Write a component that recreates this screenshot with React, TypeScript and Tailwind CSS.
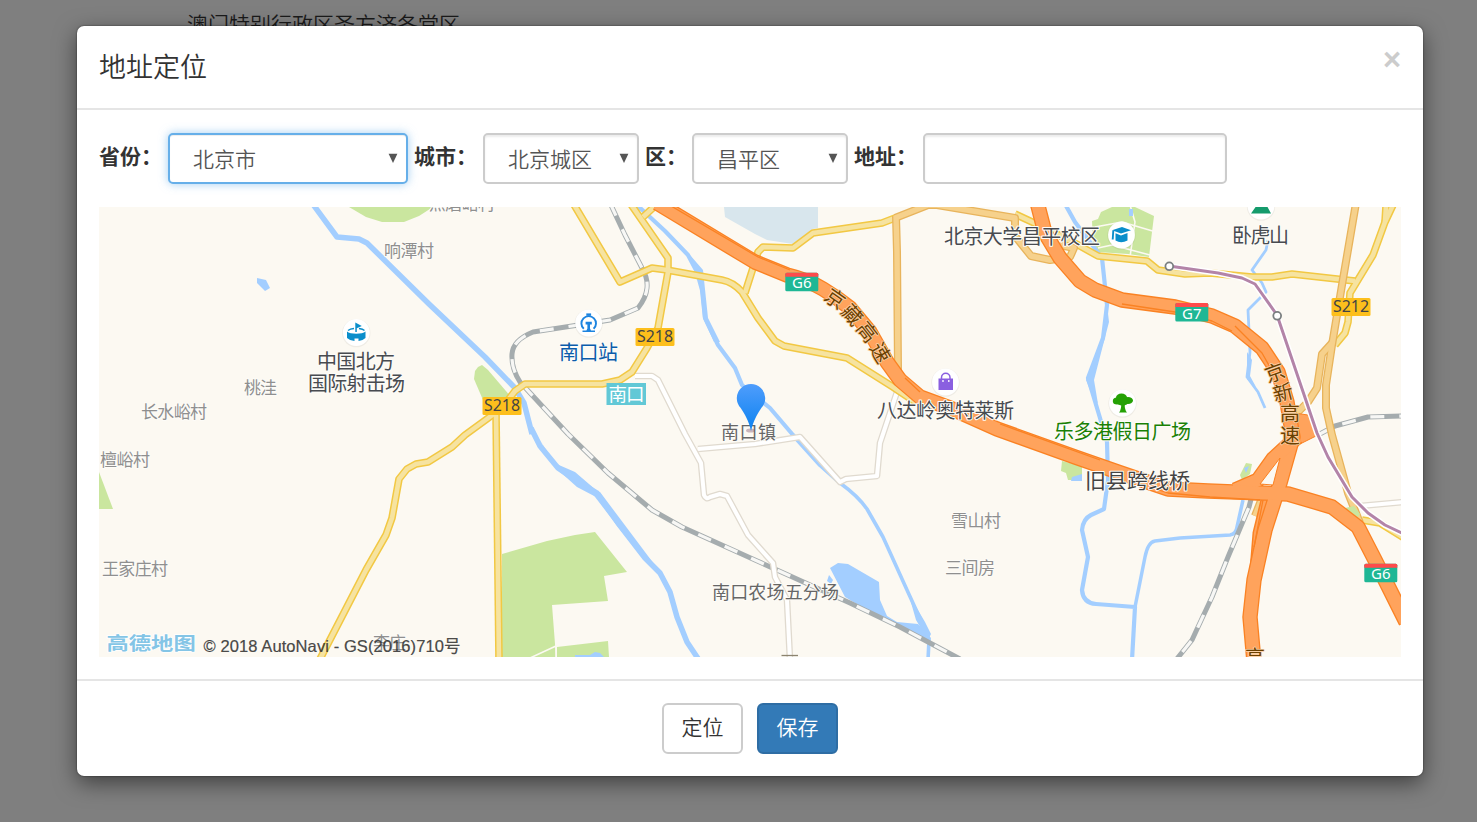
import React from "react";

const RIVERS: { d: string; w: number }[] = [
  { d: "M312 203L337 237L359 239L367 243L429 304L485 357L515 388L524 403L532 434", w: 5.5 },
  { d: "M531 428L540 446L558 468L577 481L597 493L618 523L645 558L660 573L670 592L677 617L687 642L699 660", w: 5.5 },
  { d: "M638 206L665 231L688 255L697 272L702 290L705 318L718 345L735 368L742 385L770 408L793 435L820 465L840 483", w: 4.2 },
  { d: "M840 483Q858 496 867 509L883 537L907 590L923 625L929 640L928 660", w: 3.6 },
  { d: "M1065 204L1075 222L1102 258L1107 305L1103 338L1088 378L1100 418L1107 442L1108 480L1104 509L1091 515Q1083 519 1082 530L1088 557L1082 590Q1083 603 1096 604L1135 607L1132 660", w: 4.2 },
  { d: "M1135 607L1145 557Q1148 542 1155 541L1180 538L1230 535Q1236 534 1237 527L1243 500", w: 3.5 },
  { d: "M1268 240L1266 250L1252 270L1262 283L1266 292L1248 310L1250 352L1247 377L1258 392L1265 408", w: 2.8 },
];

const WATER = [
  "257,278 266,280 270,288 265,291 257,283",
  "690,255 703,270 708,318 720,342 714,342 703,318 700,285",
  "540,440 552,462 575,472 596,490 596,497 577,487 558,470",
  "592,493 600,492 636,540 660,572 645,560 618,527",
  "830,568 838,563 848,564 879,582 880,600 887,616 897,622 918,624 931,638 930,642 887,622 850,600 845,597",
  "829,575 833,580 831,584 827,581",
  "906,585 912,600 925,622 931,634 928,640 916,620",
  "1107,305 1109,322 1094,380 1098,404 1090,390 1086,380 1103,335",
  "1247,352 1252,360 1250,376 1256,387 1247,379",
];

const RAIL =
  "M610 203L625 235L642 268Q648 278 647 288T638 308L610 320L572 326L533 332Q513 340 512 354T520 382L568 434L608 473L652 510L682 527L755 560L850 603L900 627L930 643L960 659";
const RAIL_SOUTH = "M1256 480L1249 507L1228 557L1212 597L1198 627L1192 640L1176 660";
const RAIL_EAST = "M1316 436L1335 426L1368 417L1404 416";

const LANES = [
  "M635 376H652L658 380L685 434L701 463L704 495Q706 500 710 497L720 494L727 496L748 535L773 563L775 577L787 600L790 660",
  "M698 449L755 444L800 437L840 482L846 479L877 476L880 443L897 392",
  "M1360 506L1404 502",
];

const YELLOW = [
  "M573 203L620 282L652 268L667 270L722 280Q733 282 742 292L758 318L775 341L784 346L847 358L893 387L917 403",
  "M630 203L668 258V272L658 328L647 348L632 372L620 380L602 384L525 384L515 391L502 408L465 435L452 447L428 462L416 464L407 469L399 479L392 518L386 535L366 570L319 661",
  "M496 412L499 660",
  "M643 217L655 206",
  "M745 293L753 268L758 252L763 247L793 248L813 233L882 223L895 218",
  "M1015 214L1045 228L1080 246L1098 256L1147 261L1158 270L1185 274L1210 273L1252 277H1272L1292 274L1355 281",
  "M1394 203L1385 222L1373 255L1350 293L1348 322L1345 333L1335 345",
  "M1386 206L1385 222",
  "M1362 520L1380 523L1404 538",
];

const TAN = [
  "M895 218L928 205H937L1015 218V236L1031 256L1050 260L1070 257L1074 248L1060 245",
  "M896 216L897 252L898 370",
  "M1356 203L1342 285L1332 345L1326 385V408L1332 435L1348 493L1360 523",
  "M1332 343L1322 354L1317 388L1308 402L1296 414",
  "M1262 498L1255 516",
];

const ORANGE_G6 =
  "M657 203L755 262L787 275Q808 280 823 289T850 308L870 332L887 362L900 380L920 397L950 408L997 429L1075 457L1118 472L1168 489L1208 491L1288 494L1332 507L1358 527L1375 560L1406 622";
const ORANGE_G7 =
  "M1037 202L1045 233L1060 258L1080 281L1095 290L1122 300L1175 307L1212 316L1235 326L1262 348L1278 372L1287 402L1293 437L1280 483L1265 530L1254 580L1250 617L1254 662";
const ORANGE_RAMP = "M1297 437L1273 459L1258 480L1235 490";
const ORANGE_SIDE = "M1266 496L1257 533L1254 570";

type Label = { x: number; y: number; t: string; w: number; s?: number; c?: string };

const LABELS: Label[] = [
  { x: 429, y: 210, t: "点磨峪村", w: 66, s: 17, c: "#8f8f8f" },
  { x: 384, y: 257, t: "响潭村", w: 50, s: 17, c: "#8f8f8f" },
  { x: 244, y: 394, t: "桃洼", w: 33, s: 17, c: "#8f8f8f" },
  { x: 141, y: 418, t: "长水峪村", w: 66, s: 17, c: "#8f8f8f" },
  { x: 100, y: 466, t: "檀峪村", w: 50, s: 17, c: "#8f8f8f" },
  { x: 102, y: 575, t: "王家庄村", w: 66, s: 17, c: "#8f8f8f" },
  { x: 373, y: 649, t: "李庄", w: 33, s: 17, c: "#8f8f8f" },
  { x: 951, y: 527, t: "雪山村", w: 50, s: 17, c: "#8f8f8f" },
  { x: 945, y: 574, t: "三间房", w: 50, s: 17, c: "#8f8f8f" },
  { x: 317, y: 369, t: "中国北方", w: 78, s: 20, c: "#484b50" },
  { x: 308, y: 391, t: "国际射击场", w: 97, s: 20, c: "#484b50" },
  { x: 559, y: 360, t: "南口站", w: 59, s: 20, c: "#0b5cab" },
  { x: 721, y: 439, t: "南口镇", w: 55, s: 18, c: "#666" },
  { x: 712, y: 599, t: "南口农场五分场", w: 127, s: 18, c: "#666" },
  { x: 944, y: 244, t: "北京大学昌平校区", w: 156, s: 20, c: "#484b50" },
  { x: 1232, y: 243, t: "卧虎山", w: 57, s: 20, c: "#484b50" },
  { x: 877, y: 418, t: "八达岭奥特莱斯", w: 137, s: 20, c: "#484b50" },
  { x: 1054, y: 439, t: "乐多港假日广场", w: 137, s: 20, c: "#1a8005" },
  { x: 1085, y: 488, t: "旧县跨线桥", w: 105, s: 21, c: "#444" },
];

const ROAD_CHARS = [
  { x: 835, y: 299, r: 35, t: "京" },
  { x: 852, y: 315, r: 48, t: "藏" },
  { x: 867, y: 332, r: 52, t: "高" },
  { x: 880, y: 353, r: 60, t: "速" },
  { x: 1275, y: 373, r: -20, t: "京" },
  { x: 1283, y: 393, r: -14, t: "新" },
  { x: 1290, y: 414, r: 0, t: "高" },
  { x: 1290, y: 436, r: 0, t: "速" },
  { x: 1255, y: 658, r: 0, t: "高" },
];

function Cased({ d, edge, fill, w, b = 1.4 }: { d: string; edge: string; fill: string; w: number; b?: number }) {
  return (
    <>
      <path d={d} stroke={edge} strokeWidth={w} />
      <path d={d} stroke={fill} strokeWidth={w - b * 2} />
    </>
  );
}

function Rail({ d }: { d: string }) {
  return (
    <>
      <path d={d} stroke="#a5acae" strokeWidth="5" />
      <path d={d} stroke="#f7f7f5" strokeWidth="3.2" strokeDasharray="14 15" />
    </>
  );
}

function Province({ x, y, t }: { x: number; y: number; t: string }) {
  return (
    <g>
      <rect x={x} y={y} width="39" height="18" rx="1.5" fill="#fdbf1c" />
      <text x={x + 1.5} y={y + 14.3} fontSize="15.5" textLength="36" lengthAdjust="spacingAndGlyphs" fill="#444">{t}</text>
    </g>
  );
}

function National({ x, y, t }: { x: number; y: number; t: string }) {
  return (
    <g>
      <rect x={x} y={y} width="33" height="18.500" rx="1.5" fill="#1eb795" />
      <path d={`M${x} ${y + 4}V${y + 1.5}Q${x} ${y} ${x + 1.5} ${y}H${x + 31.5}Q${x + 33} ${y} ${x + 33} ${y + 1.5}V${y + 4}Z`} fill="#ff4b4b" />
      <text x={x + 16.5} y={y + 15.6} textAnchor="middle" fontSize="15" fill="#fff">{t}</text>
    </g>
  );
}

function Disc({ x, y }: { x: number; y: number }) {
  return (
    <>
      <circle cx={x} cy={y + 0.6} r="14.200" fill="#000" fillOpacity="0.05" />
      <circle cx={x} cy={y} r="13.400" fill="#fff" />
    </>
  );
}

function MapCanvas() {
  return (
    <svg
      viewBox="99 207 1302 450"
      className="block h-[450px] w-[1302px] font-['Noto_Sans','Noto_Sans_CJK_SC',sans-serif]"
      fill="none"
      strokeLinejoin="round"
    >
      <rect x="99" y="207" width="1302" height="450" fill="#fcf9f2" />

      <g fill="#cae69f">
        <path d="M349 207L366 217L382 222H404L419 216L433 207Z" />
        <path d="M99 472L113 509H99Z" />
        <path d="M474 379L475 371L478 367L482 365L488 370L512 398L483 400Z" />
        <path d="M502 554L547 541L575 535L595 532L627 572L604 576L608 601L552 605L556 657H502Z" />
        <path d="M557 647L608 641L609 657H557Z" />
        <path d="M1092 221L1098 219L1101 212L1112 207H1135L1154 216L1152 232L1149 257L1128 254L1097 252L1093 244Z" />
        <path d="M1062 461L1082 466V480H1068L1066 473L1061 471Z" />
        <path d="M1240 475L1246 463L1252 464L1250 474L1242 480Z" />
      </g>
      <path d="M530 658L556 646V658M1095 227L1122 222L1156 232M1130 205L1135 222L1130 257M1098 248L1112 245L1150 255" stroke="#fcf9f2" strokeWidth="1.600" />
      <path d="M1129 209H1133V216H1129ZM1072 477L1082 474V481H1071ZM575 655L590 655L595 652L600 653L604 657H575ZM1244 468L1249 466L1246 473Z" fill="#a3ceff" />
      <path d="M724 207L725 217L755 234L767 240L793 244L813 229L818 228V207Z" fill="#d8e6ed" />

      {RIVERS.map((r) => (
        <path key={r.d} d={r.d} stroke="#a3ceff" strokeWidth={r.w} />
      ))}
      {WATER.map((p) => (
        <polygon key={p} points={p} fill="#a3ceff" />
      ))}

      <Rail d={RAIL} />
      <Rail d={RAIL_SOUTH} />
      <Rail d={RAIL_EAST} />
      {LANES.map((d) => (
        <Cased key={d} d={d} edge="#e0dacf" fill="#fff" w={6.6} b={1.3} />
      ))}

      {YELLOW.map((d) => (
        <path key={d} d={d} stroke="#f2c843" strokeWidth={7.6} />
      ))}
      {YELLOW.map((d) => (
        <path key={d} d={d} stroke="#f6e3a0" strokeWidth={4.6} />
      ))}
      {TAN.map((d) => (
        <path key={d} d={d} stroke="#e8b45c" strokeWidth={8} />
      ))}
      {TAN.map((d) => (
        <path key={d} d={d} stroke="#f6d18c" strokeWidth={5.4} />
      ))}
      <path d="M1345 508L1354 506L1360 514L1356 519Z" fill="#cae69f" />

      <path d={ORANGE_SIDE} stroke="#fa8223" strokeWidth="9" />
      <path d={ORANGE_SIDE} stroke="#ffa35c" strokeWidth="6" />
      <path d="M1287 412L1308 415L1316 436L1292 448Z" fill="#ffa35c" stroke="#fa8223" strokeWidth="1" />
      {[ORANGE_G7, ORANGE_RAMP, ORANGE_G6].map((d) => (
        <path key={d} d={d} stroke="#fa8223" strokeWidth="15.400" />
      ))}
      {[ORANGE_G7, ORANGE_RAMP, ORANGE_G6].map((d) => (
        <path key={d} d={d} stroke="#ffa35c" strokeWidth="12.800" />
      ))}
      <path d="M1260 484L1280 458L1273 485Z" fill="#fcf9f2" stroke="#fa8223" strokeWidth="1" />
      <path
        d="M666 203L758 257L790 270M1122 304L1175 312L1212 321L1232 331M1235 326L1262 353L1275 376M920 392L905 378M1000 424L1100 460M1150 487L1168 493L1210 497L1260 500M1263 500L1254 547"
        stroke="#fa8223"
        strokeWidth="1.300"
      />

      <path d="M1169 266L1218 273L1242 278L1255 284L1277 315L1317 433L1328 457L1352 497L1368 513L1385 525L1404 534" stroke="#fff" strokeWidth="6" />
      <path d="M1169 266L1218 273L1242 278L1255 284L1277 315L1317 433L1328 457L1352 497L1368 513L1385 525L1404 534" stroke="#b384a8" strokeWidth="3" />
      <g fill="#fff" stroke="#7a7f80" strokeWidth="1.800">
        <circle cx="1169.300" cy="266.300" r="3.900" />
        <circle cx="1277.200" cy="315.800" r="3.900" />
      </g>

      <Province x={635.5} y={328} t="S218" />
      <Province x={482.5} y={397} t="S218" />
      <Province x={1331.5} y={298} t="S212" />
      <National x={785.3} y={272.7} t="G6" />
      <National x={1175.3} y={303} t="G7" />
      <National x={1364.3} y={563.8} t="G6" />
      <rect x="606.500" y="383" width="39.500" height="22" fill="#62c8d6" />
      <text x="608.500" y="401" fontSize="18.500" textLength="36" fill="#fff">南口</text>

      <Disc x={356.3} y={332.5} />
      <g fill="#0a8ecb">
        <path d="M347 331.500C350 334.500 362.500 334.500 365.500 331.500V338Q363 340.500 358.500 341V338.500H354.500V341Q349.500 340.500 347 338Z" />
        <path d="M348 330.500Q350 328.800 354 328.500M359 328.500Q363 328.900 364.500 330.500" stroke="#0a8ecb" strokeWidth="1.300" fill="none" />
        <path d="M355.300 332V322.500L361.800 326L356.800 328.300V332Z" />
      </g>
      <Disc x={588.7} y={323} />
      <g stroke="#1d84e0" strokeWidth="1.900">
        <path d="M583.800 328.800A7.300 7.300 0 1 1 593.600 328.800" />
        <path d="M586.300 314.600H591.100" strokeWidth="2.400" />
      </g>
      <path d="M585.600 321.800H591.800V324.600H590V328.500L591 330.600H595V332H582.500V330.600H586.400L587.400 328.500V324.600H585.600Z" fill="#1d84e0" />
      <Disc x={945.5} y={382} />
      <path d="M938.500 378.500H953V390H938.500Z" fill="#8a5fe0" />
      <path d="M941.500 379V377.500A4.200 4.200 0 0 1 950 377.500V379" stroke="#8a5fe0" strokeWidth="1.500" />
      <path d="M943 380V382M948.800 380V382" stroke="#fff" strokeWidth="1.300" />
      <Disc x={1121.5} y={235} />
      <path d="M1112 230.200L1122 227L1131 230.200L1121 233.600Z" fill="#0a8ecb" />
      <path d="M1115.500 233.300L1121 235.500L1127.500 233V240.500Q1121 244 1115.500 240.500Z" fill="#0a8ecb" />
      <path d="M1113.300 230.500L1112.700 239.500" stroke="#0a8ecb" strokeWidth="1.900" />
      <Disc x={1122.5} y={403} />
      <g fill="#25a105">
        <ellipse cx="1117" cy="401" rx="4.200" ry="3.600" />
        <ellipse cx="1121.500" cy="397.500" rx="5.500" ry="4" />
        <ellipse cx="1128" cy="400.500" rx="5" ry="3.500" />
        <ellipse cx="1122.500" cy="402" rx="6" ry="3.500" />
        <path d="M1121 403H1125Q1124 409 1127 412.500H1119Q1121.800 409 1121 403Z" />
      </g>
      <Disc x={1261} y={206} />
      <path d="M1251 213.500L1257 205L1262 203L1265 207L1267 206L1271 213.500Z" fill="#159b6c" />

      {LABELS.map((l) => (
        <text
          key={l.t}
          x={l.x}
          y={l.y}
          textLength={l.w}
          fontSize={l.s}
          fill={l.c}
          stroke="#fdfcf8"
          strokeWidth="2"
          paintOrder="stroke"
        >
          {l.t}
        </text>
      ))}
      {ROAD_CHARS.map((c, i) => (
        <text
          key={i}
          x={c.x}
          y={c.y + 7}
          fontSize="20"
          textAnchor="middle"
          transform={`rotate(${c.r} ${c.x} ${c.y})`}
          fill="#6b4100"
          stroke="#fbd0a5"
          strokeWidth="1.600"
          paintOrder="stroke"
        >
          {c.t}
        </text>
      ))}
      <path d="M781.500 655.500H798" stroke="#8c8470" strokeWidth="1.300" />

      <defs>
        <linearGradient id="pin" x1="0" y1="0" x2="0" y2="1">
          <stop offset="0" stopColor="#4f9dfc" />
          <stop offset="1" stopColor="#0c82f0" />
        </linearGradient>
      </defs>
      <ellipse cx="750.500" cy="430.500" rx="4.500" ry="2" fill="#7d5068" fillOpacity="0.4" />
      <path d="M751 431C748.500 420 745 415 740.500 407.800A14.200 14.200 0 1 1 761.500 407.800C757 415 753.500 420 751 431Z" fill="url(#pin)" />

      <text
        transform="translate(106.500 649.500) scale(1.240 1)"
        fontSize="18"
        fontWeight="700"
        fill="#84c5e6"
        stroke="#fff"
        strokeWidth="1.500"
        paintOrder="stroke"
      >
        高德地图
      </text>
      <text
        x="203.500"
        y="651.500"
        fontSize="16.500"
        textLength="257"
        fill="#333"
        fillOpacity="0.9"
        stroke="#333"
        strokeWidth="0.200"
        className="font-['Liberation_Sans','Noto_Sans_CJK_SC',sans-serif]"
      >
        © 2018 AutoNavi - GS(2016)710号
      </text>
    </svg>
  );
}

function Field({
  label,
  labelClass,
  boxClass,
  value,
}: {
  label: string;
  labelClass: string;
  boxClass: string;
  value: string;
}) {
  return (
    <div className="mr-1.5 flex">
      <span className={`pt-1.5 text-[21px] leading-[33px] font-bold text-[#333] ${labelClass}`}>{label}</span>
      <button
        className={`flex h-[51px] items-center justify-between rounded-[5px] border-2 bg-white pr-2 pl-[23px] text-[21px] font-[350] text-[#555] ${boxClass}`}
      >
        <span>{value}</span>
        <svg viewBox="0 0 10 11" className="h-[11px] w-[10px]">
          <path d="M0.600 0.800H9.400L5 10Z" fill="#555" />
        </svg>
      </button>
    </div>
  );
}

export default function App() {
  return (
    <div className="h-[822px] w-[1477px] overflow-hidden bg-[#7f7f7f] font-['Noto_Sans_CJK_SC',sans-serif]">
      <p className="h-[26px] pt-2 pl-[187px] text-[21px] leading-[30px] font-[350] text-[#1a1a1a]">
        澳门特别行政区圣方济各堂区
      </p>
      <section className="relative ml-[77px] flex h-[750px] w-[1346px] flex-col rounded-[7px] bg-white shadow-[0_7px_22px_rgba(0,0,0,0.5),0_0_2px_rgba(0,0,0,0.6)]">
        <header className="flex h-[84px] justify-between border-b-2 border-[#e5e5e5] px-[22px]">
          <h4 className="pt-5 text-[27px] leading-[39px] font-[350] text-[#333]">地址定位</h4>
          <button className="mt-4 h-9 font-['Liberation_Sans',sans-serif] text-[31px] leading-9 font-bold text-[#ccc]">×</button>
        </header>
        <main className="h-[571px] border-b-2 border-[#e5e5e5] px-[22px] pt-[23px]">
          <div className="mb-[23px] flex h-[51px]">
            <Field
              label="省份："
              labelClass="w-[69px]"
              boxClass="w-[240px] border-[#66afe9] shadow-[inset_0_1px_1px_rgba(0,0,0,0.075),0_0_10px_rgba(102,175,233,0.6)]"
              value="北京市"
            />
            <Field
              label="城市："
              labelClass="w-[69px]"
              boxClass="w-[156px] border-[#ccc] shadow-[inset_0_2px_2px_rgba(0,0,0,0.075)]"
              value="北京城区"
            />
            <Field
              label="区："
              labelClass="w-[47px]"
              boxClass="w-[156px] border-[#ccc] shadow-[inset_0_2px_2px_rgba(0,0,0,0.075)]"
              value="昌平区"
            />
            <label className="flex">
              <span className="w-[69px] pt-1.5 text-[21px] leading-[33px] font-bold text-[#333]">地址：</span>
              <input className="h-[51px] w-[304px] rounded-[5px] border-2 border-[#ccc] px-4 text-[21px] text-[#555] shadow-[inset_0_2px_2px_rgba(0,0,0,0.075)]" />
            </label>
          </div>
          <MapCanvas />
        </main>
        <footer className="flex justify-center gap-[14px] pt-[22px]">
          <button className="h-[51px] w-[81px] rounded-[6px] border-2 border-[#ccc] bg-white pb-[3px] text-[21px] font-[350] text-[#333]">
            定位
          </button>
          <button className="h-[51px] w-[81px] rounded-[6px] border-2 border-[#2e6da4] bg-[#337ab7] pb-[3px] text-[21px] font-[350] text-white">
            保存
          </button>
        </footer>
      </section>
    </div>
  );
}
